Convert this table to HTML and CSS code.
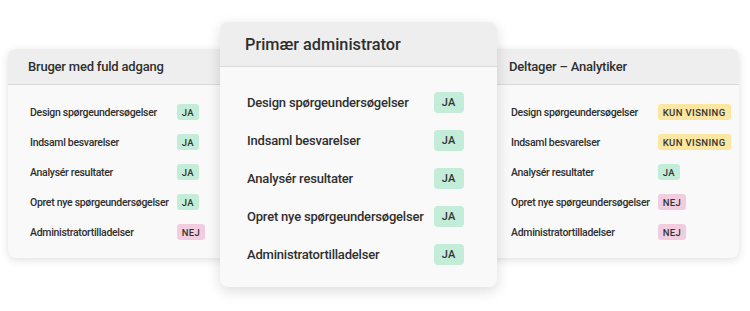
FILE: index.html
```html
<!DOCTYPE html>
<html lang="da">
<head>
<meta charset="utf-8">
<title>Roller</title>
<link rel="stylesheet" href="styles.css">
</head>
<body>
<div class="stage">
  <section class="card side left">
    <header class="card-head">Bruger med fuld adgang</header>
    <div class="card-body">
      <span class="label">Design spørgeundersøgelser</span><span class="badge yes">JA</span>
      <span class="label">Indsaml besvarelser</span><span class="badge yes">JA</span>
      <span class="label">Analysér resultater</span><span class="badge yes">JA</span>
      <span class="label">Opret nye spørgeundersøgelser</span><span class="badge yes">JA</span>
      <span class="label">Administratortilladelser</span><span class="badge no">NEJ</span>
    </div>
  </section>
  <section class="card main">
    <header class="card-head">Primær administrator</header>
    <div class="card-body">
      <span class="label">Design spørgeundersøgelser</span><span class="badge yes">JA</span>
      <span class="label">Indsaml besvarelser</span><span class="badge yes">JA</span>
      <span class="label">Analysér resultater</span><span class="badge yes">JA</span>
      <span class="label">Opret nye spørgeundersøgelser</span><span class="badge yes">JA</span>
      <span class="label">Administratortilladelser</span><span class="badge yes">JA</span>
    </div>
  </section>
  <section class="card side right">
    <header class="card-head">Deltager – Analytiker</header>
    <div class="card-body">
      <span class="label">Design spørgeundersøgelser</span><span class="badge view">KUN VISNING</span>
      <span class="label">Indsaml besvarelser</span><span class="badge view">KUN VISNING</span>
      <span class="label">Analysér resultater</span><span class="badge yes">JA</span>
      <span class="label">Opret nye spørgeundersøgelser</span><span class="badge no">NEJ</span>
      <span class="label">Administratortilladelser</span><span class="badge no">NEJ</span>
    </div>
  </section>
</div>
</body>
</html>
```
FILE: styles.css
```css
html, body {
  margin: 0;
  padding: 0;
  background: #ffffff;
}
body {
  font-family: Roboto, "Noto Sans", sans-serif;
  color: #2f2f2f;
  width: 750px;
  height: 311px;
  overflow: hidden;
}
.stage {
  display: flex;
  align-items: flex-start;
  padding: 22px 0 0 8px;
}
.card {
  background: #f9f9f9;
  border-radius: 8px;
  overflow: hidden;
  box-shadow: 0 2px 8px rgba(0, 0, 0, 0.13);
}
.card-head {
  display: flex;
  align-items: center;
  background: #eeeeee;
  border-bottom: 1px solid #dadada;
  font-weight: 500;
}
.card-body {
  display: grid;
  grid-template-columns: max-content max-content;
  align-items: center;
}
.label {
  font-weight: 500;
}
.badge {
  justify-self: start;
  display: inline-flex;
  align-items: center;
  justify-content: center;
  font-weight: 500;
  color: #333333;
  letter-spacing: 0.3px;
}
.yes { background: #c3ecd9; }
.no { background: #f2cde0; }
.view { background: #fbe6a2; }

.side {
  margin-top: 27px;
}
.left { width: 222px; }
.right { width: 250px; margin-left: -8px; }
.side .card-head {
  height: 35px;
  padding-left: 20px;
  font-size: 13px;
  letter-spacing: -0.2px;
}
.side .card-body {
  padding: 12px 22px 11px;
  grid-auto-rows: 30px;
  column-gap: 8px;
}
.side .label {
  font-size: 10.5px;
  letter-spacing: -0.3px;
}
.side .badge {
  height: 16px;
  padding: 0 5px;
  border-radius: 3px;
  font-size: 9.5px;
  letter-spacing: 0.4px;
}

.main {
  width: 277px;
  margin-left: -10px;
  position: relative;
  z-index: 1;
  box-shadow: 0 4px 14px rgba(0, 0, 0, 0.14);
}
.main .card-head {
  height: 44px;
  padding-left: 25px;
  font-size: 16.3px;
}
.main .card-body {
  padding: 16px 27px 14px;
  grid-auto-rows: 38px;
  column-gap: 10px;
}
.main .label {
  font-size: 13px;
  letter-spacing: -0.2px;
}
.main .badge {
  height: 21px;
  padding: 0 8px;
  border-radius: 4px;
  font-size: 11px;
}
```
